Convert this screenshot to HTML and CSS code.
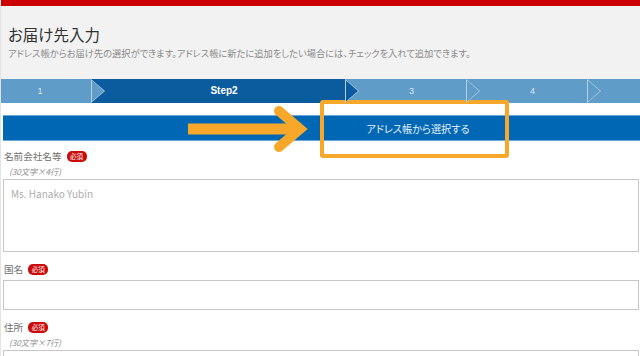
FILE: index.html
```html
<!DOCTYPE html>
<html lang="ja">

<head>
    <meta charset="UTF-8">
    <meta name="viewport" content="width=device-width, initial-scale=1.0">
    <title>お届け先入力</title>
    <link rel="stylesheet" href="styles.css">
</head>

<body>
    <div class="page">
        <div class="topbar"></div>
        <div class="head">
            <h1 class="title">お届け先入力</h1>
            <p class="lead">アドレス帳からお届け先の選択ができます。アドレス帳に新たに追加をしたい場合には、チェックを入れて追加できます。</p>
        </div>
        <ol class="steps">
            <li class="step first">1</li>
            <li class="step current">Step2</li>
            <li class="step">3</li>
            <li class="step">4</li>
            <li class="step last"></li>
        </ol>
        <div class="pick">
            <button class="pickbtn">アドレス帳から選択する</button>
        </div>
        <div class="form">
            <div class="field">
                <div class="label">名前会社名等<span class="req">必須</span></div>
                <div class="note">(30文字×4行)</div>
                <textarea class="box tall" placeholder="Ms. Hanako Yubin"></textarea>
            </div>
            <div class="field">
                <div class="label">国名<span class="req">必須</span></div>
                <input class="box line" type="text">
            </div>
            <div class="field">
                <div class="label">住所<span class="req">必須</span></div>
                <div class="note">(30文字×7行)</div>
                <textarea class="box tall"></textarea>
            </div>
        </div>

        <!-- guide marks drawn over the page -->
        <svg class="arrow" width="140" height="60" viewBox="180 100 140 60">
            <line x1="188" y1="129" x2="298" y2="129" stroke="#f7a82a" stroke-width="11" />
            <polyline points="279,111 300,129 279,147" fill="none" stroke="#f7a82a" stroke-width="10"
                stroke-linecap="round" stroke-linejoin="miter" />
        </svg>
        <div class="mark"></div>
    </div>
</body>

</html>
```

FILE: styles.css
```css
* {
    box-sizing: border-box;
}

body {
    margin: 0;
    font-family: "Noto Sans CJK JP", sans-serif;
    color: #555;
    background-color: #ffffff;
}

.page {
    position: relative;
    width: 640px;
    height: 356px;
    overflow: hidden;
    border-left: 1px solid #e4e4e4;
}

.topbar {
    height: 6px;
    background-color: #cc0000;
}

.head {
    background-color: #f2f2f2;
    padding: 20px 7px 21px;
    height: 73px;
}

.title {
    margin: 0;
    font-size: 15.5px;
    line-height: 16px;
    font-weight: normal;
    color: #333;
    font-feature-settings: "palt";
}

.lead {
    margin: 6px 0 0;
    font-size: 9.25px;
    line-height: 10px;
    color: #8a8a8a;
    font-feature-settings: "palt";
    white-space: nowrap;
}

.steps {
    display: flex;
    margin: 0;
    padding: 0;
    list-style: none;
    height: 24px;
}

.step {
    position: relative;
    width: 121px;
    background-color: #5f9cc8;
    color: #dce9f3;
    font-family: "Liberation Sans", Arial, sans-serif;
    font-size: 9px;
    line-height: 24px;
    text-align: center;
    padding-left: 12px;
}

.step.first {
    width: 90px;
    padding-left: 0;
    padding-right: 12px;
}

.step.current {
    width: 254px;
    background-color: #0b5c9f;
    color: #fff;
    font-weight: bold;
    font-size: 10px;
}

.step.last {
    flex: 1;
}

.step::before,
.step::after {
    content: "";
    position: absolute;
    z-index: 1;
    clip-path: polygon(0 0, 100% 50%, 0 100%);
}

.step::before {
    left: 100%;
    top: 0;
    width: 14px;
    height: 24px;
    background-color: #b4d0e6;
}

.step::after {
    left: calc(100% + 1px);
    top: 1.5px;
    width: 12px;
    height: 21px;
    background-color: #5f9cc8;
}

.step.current::after {
    background-color: #0b5c9f;
}

.step.last::before,
.step.last::after {
    display: none;
}

.pick {
    padding: 12px 0 0 2px;
}

.pickbtn {
    display: block;
    width: 100%;
    height: 26px;
    border: none;
    border-top: 1px solid #6aa6d8;
    border-bottom: 1px solid #6aa6d8;
    background-color: #0067b5;
    color: #e8f1f9;
    font-family: "Noto Sans CJK JP", sans-serif;
    font-size: 10.2px;
    font-feature-settings: "palt";
    padding: 0 0 0 193px;
}

.form {
    padding: 8px 0 0 2px;
}

.field + .field {
    margin-top: 10px;
}

.label {
    display: flex;
    align-items: center;
    gap: 5px;
    height: 14px;
    font-size: 9.6px;
    color: #707070;
    margin-left: 1px;
}

.req {
    display: inline-block;
    width: 20px;
    height: 11px;
    border-radius: 5px;
    background-color: #cc0a0a;
    color: #fff;
    font-size: 6.5px;
    line-height: 11px;
    text-align: center;
}

.note {
    height: 16px;
    line-height: 16px;
    padding-left: 6px;
    font-size: 8.2px;
    font-style: italic;
    color: #8a8a8a;
}

.box {
    display: block;
    width: 636px;
    border: 1px solid #c6c6c6;
    background-color: #fff;
    font-family: "Noto Sans CJK JP", sans-serif;
    font-size: 10px;
    margin: 0;
}

.tall {
    height: 73px;
    padding: 7px 7px;
    resize: none;
    line-height: 14px;
}

.tall::placeholder {
    color: #adadad;
}

.line {
    height: 30px;
    margin-top: 4px;
}

.arrow {
    position: absolute;
    left: 179px;
    top: 100px;
}

.mark {
    position: absolute;
    left: 319px;
    top: 100px;
    width: 189px;
    height: 58px;
    border: 4px solid #f7a82a;
    border-radius: 3px;
}
```
